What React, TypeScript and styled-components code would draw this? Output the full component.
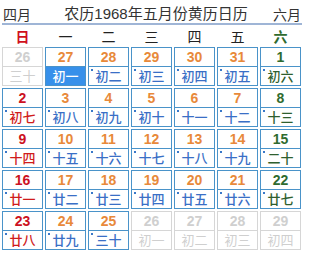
import { FC } from "react";
import styled, { createGlobalStyle } from "styled-components";

type Kind = "sun" | "week" | "sat" | "off";

type Day = { solar: number; lunar: string; off?: boolean; selected?: boolean };

const rows: Day[][] = [
  [
    { solar: 26, lunar: "三十", off: true },
    { solar: 27, lunar: "初一", selected: true },
    { solar: 28, lunar: "初二" },
    { solar: 29, lunar: "初三" },
    { solar: 30, lunar: "初四" },
    { solar: 31, lunar: "初五" },
    { solar: 1, lunar: "初六" },
  ],
  [
    { solar: 2, lunar: "初七" },
    { solar: 3, lunar: "初八" },
    { solar: 4, lunar: "初九" },
    { solar: 5, lunar: "初十" },
    { solar: 6, lunar: "十一" },
    { solar: 7, lunar: "十二" },
    { solar: 8, lunar: "十三" },
  ],
  [
    { solar: 9, lunar: "十四" },
    { solar: 10, lunar: "十五" },
    { solar: 11, lunar: "十六" },
    { solar: 12, lunar: "十七" },
    { solar: 13, lunar: "十八" },
    { solar: 14, lunar: "十九" },
    { solar: 15, lunar: "二十" },
  ],
  [
    { solar: 16, lunar: "廿一" },
    { solar: 17, lunar: "廿二" },
    { solar: 18, lunar: "廿三" },
    { solar: 19, lunar: "廿四" },
    { solar: 20, lunar: "廿五" },
    { solar: 21, lunar: "廿六" },
    { solar: 22, lunar: "廿七" },
  ],
  [
    { solar: 23, lunar: "廿八" },
    { solar: 24, lunar: "廿九" },
    { solar: 25, lunar: "三十" },
    { solar: 26, lunar: "初一", off: true },
    { solar: 27, lunar: "初二", off: true },
    { solar: 28, lunar: "初三", off: true },
    { solar: 29, lunar: "初四", off: true },
  ],
];

const weekdays = ["日", "一", "二", "三", "四", "五", "六"];

const kindOf = (col: number, off?: boolean): Kind => {
  if (off) return "off";
  if (col === 0) return "sun";
  if (col === 6) return "sat";
  return "week";
};

const numberColor: Record<Kind, string> = {
  sun: "#cc1122",
  week: "#e8893a",
  sat: "#2f6b2f",
  off: "#cfcfcf",
};

const lunarColor: Record<Kind, string> = {
  sun: "#d01c1c",
  week: "#3a6fc6",
  sat: "#2f5f2f",
  off: "#cfcfcf",
};

const GlobalStyle = createGlobalStyle`
  body {
    margin: 0;
    background: #fff;
    font-family: "Liberation Sans", "Noto Sans CJK SC", sans-serif;
  }
`;

export default function App() {
  return (
    <>
      <GlobalStyle />
      <Wrapper>
        <Header>
          <MonthLink>四月</MonthLink>
          <Title>农历1968年五月份黄历日历</Title>
          <MonthLink>六月</MonthLink>
        </Header>
        <WeekRow>
          {weekdays.map((w, i) => (
            <WeekDay key={w} $kind={kindOf(i)}>
              {w}
            </WeekDay>
          ))}
        </WeekRow>
        <Grid>
          {rows.flat().map((d, i) => (
            <DayCell key={i} day={d} kind={kindOf(i % 7, d.off)} />
          ))}
        </Grid>
      </Wrapper>
    </>
  );
}

const DayCell: FC<{ day: Day; kind: Kind }> = ({ day, kind }) => (
  <Cell $off={kind === "off"}>
    <Solar $kind={kind}>{day.solar}</Solar>
    <Lunar $kind={kind} $off={kind === "off"} $selected={!!day.selected}>
      {kind !== "off" && !day.selected && <Dot />}
      {day.lunar}
    </Lunar>
  </Cell>
);

const Wrapper = styled.div`
  width: 300px;
  margin-left: 2px;
`;

const Header = styled.div`
  height: 25px;
  display: flex;
  align-items: center;
  justify-content: space-between;
  padding: 4px 1px 0 1px;
  box-sizing: border-box;
  border-bottom: 2px solid #9fb5d6;
  font-family: "Liberation Sans", "Noto Sans CJK SC", sans-serif;
  color: #333;
`;

const MonthLink = styled.span`
  font-size: 14px;
  line-height: 18px;
  font-family: "Noto Sans CJK SC", sans-serif;
`;

const Title = styled.span`
  font-size: 15px;
  line-height: 18px;
  margin-left: 8px;
`;

const WeekRow = styled.div`
  display: grid;
  grid-template-columns: repeat(7, 41px);
  column-gap: 2px;
  height: 22px;
`;

const WeekDay = styled.div<{ $kind: Kind }>`
  text-align: center;
  line-height: 22px;
  font-size: 14px;
  font-family: "Noto Sans CJK SC", sans-serif;
  color: ${(p) =>
    p.$kind === "sun" ? "#d0101c" : p.$kind === "sat" ? "#2f6b2f" : "#222"};
  font-weight: ${(p) => (p.$kind === "week" ? 400 : 700)};
`;

const Grid = styled.div`
  display: grid;
  grid-template-columns: repeat(7, 41px);
  grid-auto-rows: 39px;
  gap: 2px;
`;

const Cell = styled.div<{ $off: boolean }>`
  display: flex;
  flex-direction: column;
  border: 1px solid ${(p) => (p.$off ? "#d6d6d6" : "#4a93c9")};
  box-sizing: border-box;
`;

const Solar = styled.div<{ $kind: Kind }>`
  height: 18px;
  line-height: 18px;
  text-align: center;
  font-family: "Liberation Sans", sans-serif;
  font-weight: 700;
  font-size: 14px;
  color: ${(p) => numberColor[p.$kind]};
`;

const Lunar = styled.div<{ $kind: Kind; $off: boolean; $selected: boolean }>`
  position: relative;
  flex: 1;
  border-top: 1px solid ${(p) => (p.$off ? "#d6d6d6" : "#4a93c9")};
  text-align: center;
  line-height: 18px;
  font-size: 13px;
  font-family: "Noto Sans CJK SC", sans-serif;
  font-weight: ${(p) => (p.$off ? 400 : 500)};
  color: ${(p) => (p.$selected ? "#fff" : lunarColor[p.$kind])};
  background: ${(p) => (p.$selected ? "#3790ea" : "transparent")};
`;

const Dot = styled.span`
  position: absolute;
  left: 2px;
  top: 2px;
  width: 2px;
  height: 2px;
  background: #3a78c8;
`;
